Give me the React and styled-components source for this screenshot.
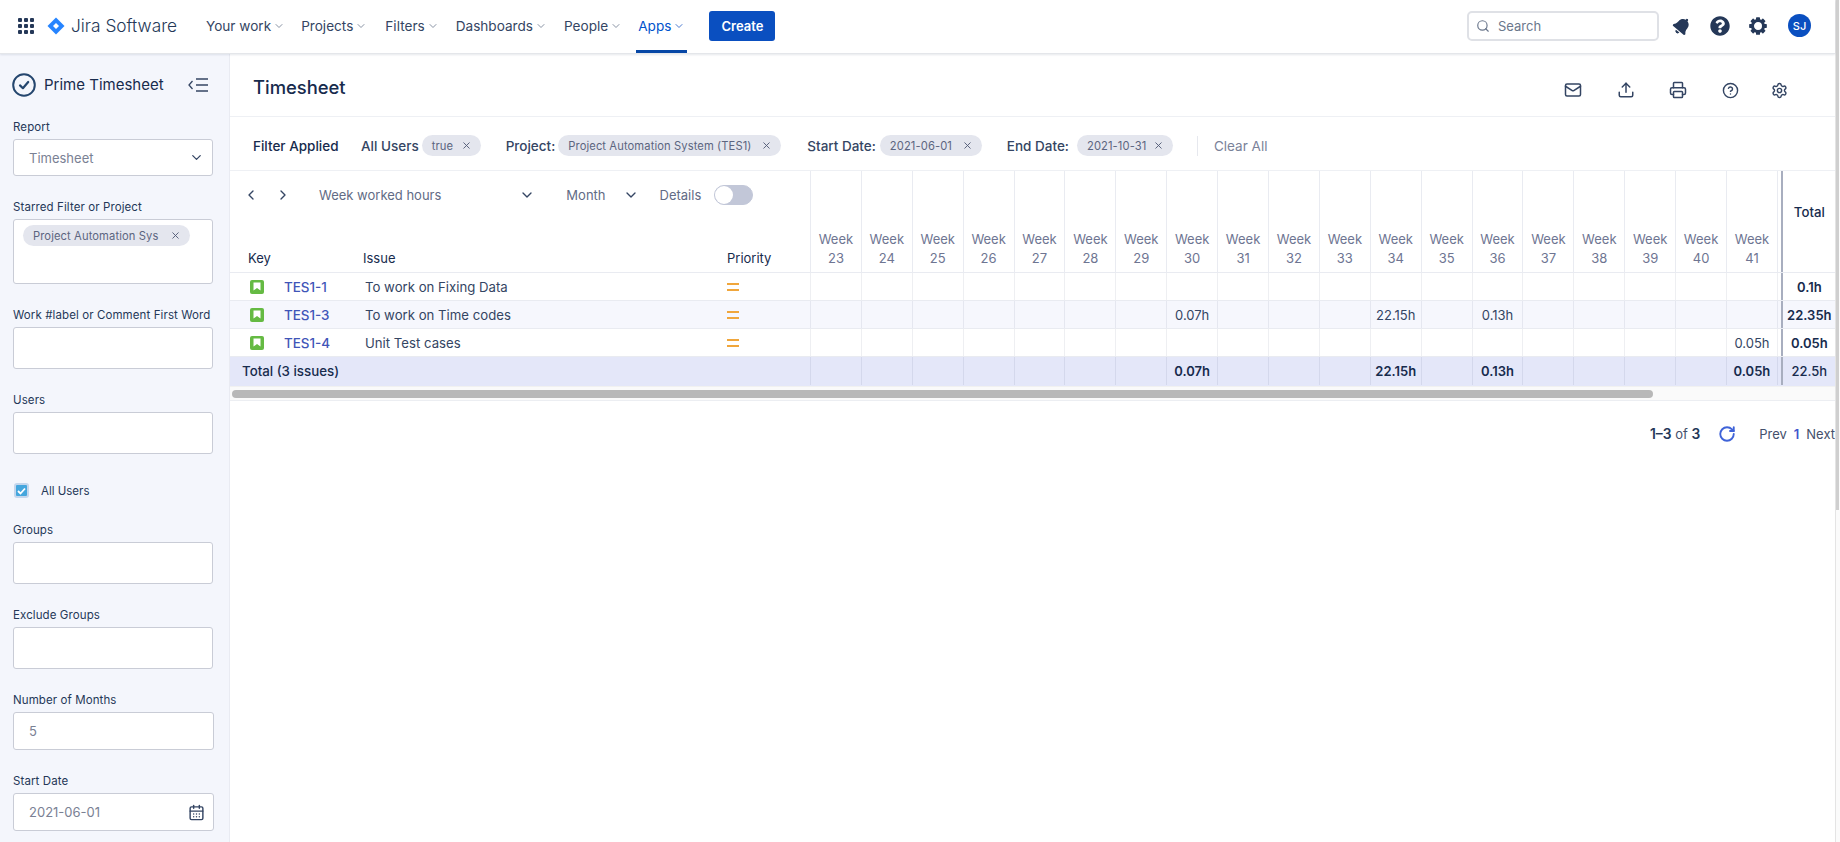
import React from "react";
import styled, { createGlobalStyle } from "styled-components";
import {
  Mail,
  Upload,
  Printer,
  CircleHelp,
  Settings,
  ChevronDown,
  ChevronLeft,
  ChevronRight,
  Search,
  X,
  CalendarDays,
  RotateCw,
} from "lucide-react";
import { FaBell, FaQuestionCircle } from "react-icons/fa";

const GlobalStyle = createGlobalStyle`
  * { box-sizing: border-box; }
  html, body { margin: 0; height: 100%; overflow: hidden; background: #fff; }
  body {
    font-family: Inter, "Liberation Sans", sans-serif;
    color: #172b4d;
    -webkit-font-smoothing: antialiased;
  }
`;

const GRID = "124px 362px 94px repeat(19, 50.9px) 3.9px 55px";

const Page = styled.div`
  display: flex;
  height: 100vh;
  overflow: hidden;
`;
const Main = styled.div`
  flex: 1;
  min-width: 0;
  display: flex;
  flex-direction: column;
`;
const ScrollRail = styled.div`
  width: 5px;
  background: #fbfbfb;
  border-left: 1px solid #e4e4e4;
`;
const RailThumb = styled.div`
  width: 3px;
  height: 510px;
  background: #cfcfcf;
`;

/* top bar */
const TopBar = styled.header`
  height: 54px;
  flex: none;
  display: flex;
  align-items: center;
  padding: 0 24px 2px 18px;
  border-bottom: 1px solid #e4e6ea;
  box-shadow: 0 1px 2px rgba(9, 30, 66, 0.1);
  position: relative;
  z-index: 2;
  background: #fff;
`;
const AppsGrid = styled.div`
  display: grid;
  grid-template-columns: repeat(3, 4px);
  gap: 2px;
  margin-right: 13px;
  span {
    width: 4px;
    height: 4px;
    background: #253858;
    border-radius: 1px;
  }
`;
const Brand = styled.div`
  display: flex;
  align-items: center;
  gap: 6px;
  font-size: 17.3px;
  font-weight: 300;
  color: #253858;
  width: 159px;
  white-space: nowrap;
`;
const NavItem = styled.div`
  position: relative;
  display: flex;
  align-items: center;
  gap: 2px;
  height: 52px;
  font-size: 13.6px;
  color: ${(p) => (p.$active ? "#0052cc" : "#344563")};
  margin-right: ${(p) => p.$gap}px;
  white-space: nowrap;
  svg {
    color: ${(p) => (p.$active ? "#4c7ad0" : "#8993a4")};
  }
  ${(p) =>
    p.$active &&
    `&::after {
      content: "";
      position: absolute;
      left: -2px;
      right: -2px;
      bottom: -1px;
      height: 3px;
      background: #0747a6;
    }`}
`;
const CreateButton = styled.div`
  width: 66px;
  height: 30px;
  display: flex;
  align-items: center;
  justify-content: center;
  border-radius: 3px;
  background: #0a4fc0;
  color: #fff;
  font-size: 13px;
  font-weight: 600;
`;
const TopRight = styled.div`
  margin-left: auto;
  display: flex;
  align-items: center;
`;
const SearchBox = styled.div`
  width: 192px;
  height: 30px;
  border: 2px solid #dfe1e6;
  border-radius: 5px;
  display: flex;
  align-items: center;
  gap: 8px;
  padding: 0 7px;
  font-size: 13px;
  color: #6b778c;
  margin-right: 4px;
`;
const TopIcon = styled.div`
  width: 38px;
  display: flex;
  justify-content: center;
  color: #253858;
`;
const Avatar = styled.div`
  width: 23px;
  height: 23px;
  border-radius: 50%;
  background: #0a4fc0;
  color: #fff;
  font-size: 11px;
  font-weight: 500;
  display: flex;
  align-items: center;
  justify-content: center;
  margin-left: 11px;
`;

const Body = styled.div`
  flex: 1;
  display: flex;
  min-height: 0;
`;

/* sidebar */
const Sidebar = styled.aside`
  width: 230px;
  flex: none;
  background: #f4f6fc;
  border-right: 1px solid #e9ebf2;
  padding: 0 16px 0 13px;
  overflow: hidden;
`;
const SideTitle = styled.div`
  display: flex;
  align-items: center;
  height: 66px;
  padding-bottom: 5px;
  margin-left: -1px;
  padding-right: 4px;
  font-size: 15px;
  font-weight: 400;
  color: #172b4d;
  white-space: nowrap;
  span {
    margin-left: 8px;
    flex: 1;
  }
`;
const Field = styled.div`
  margin-bottom: ${(p) => p.$mb ?? 24}px;
`;
const FieldLabel = styled.div`
  font-size: 11.5px;
  line-height: 14px;
  letter-spacing: 0.1px;
  color: #253858;
  margin-bottom: 5px;
  white-space: nowrap;
`;
const InputBox = styled.div`
  height: ${(p) => p.$h}px;
  width: ${(p) => p.$w ?? 200}px;
  background: #fff;
  border: 1px solid #c9ccd6;
  border-radius: 3px;
  display: flex;
  align-items: ${(p) => (p.$top ? "flex-start" : "center")};
  justify-content: space-between;
  padding: ${(p) => (p.$top ? "5px 9px" : "0 8px 0 15px")};
  font-size: 13px;
  color: #7a8194;
`;
const Chip = styled.div`
  display: inline-flex;
  align-items: center;
  justify-content: space-between;
  height: 21px;
  width: ${(p) => p.$w}px;
  padding: 0 9px 0 10px;
  border-radius: 11px;
  background: #e4e6ee;
  color: #5c6580;
  font-size: 11.2px;
  font-weight: 400;
  letter-spacing: 0.1px;
  white-space: nowrap;
  svg {
    color: #505a75;
    flex: none;
  }
`;
const CheckRow = styled.div`
  display: flex;
  align-items: center;
  gap: 12px;
  margin: 0 0 24px 1px;
  height: 17px;
  font-size: 11.5px;
  color: #253858;
`;
const CheckBox = styled.div`
  width: 15px;
  height: 15px;
  border-radius: 3px;
  background: #45a6dd;
  border: 2px solid #c4d6ec;
  display: flex;
  align-items: center;
  justify-content: center;
`;

/* content */
const Content = styled.main`
  flex: 1;
  min-width: 0;
  display: flex;
  flex-direction: column;
`;
const TitleRow = styled.div`
  height: 63px;
  flex: none;
  display: flex;
  align-items: center;
  padding: 0 47px 0 23px;
  border-bottom: 1px solid #eef0f4;
  h1 {
    margin: 4px auto 0 0;
    font-size: 18.4px;
    font-weight: 500;
    color: #172b4d;
  }
`;
const ActionIcon = styled.div`
  width: 18px;
  display: flex;
  justify-content: center;
  color: #344563;
  margin: 10px 0 0 ${(p) => p.$ml ?? 0}px;
`;
const FilterRow = styled.div`
  height: 54px;
  flex: none;
  display: flex;
  align-items: center;
  padding: 4px 0 0 23px;
  border-bottom: 1px solid #eef0f4;
  font-size: 13.5px;
  font-weight: 500;
  color: #344563;
  white-space: nowrap;
`;
const FilterTitle = styled.div`
  color: #172b4d;
  width: 108px;
`;
const FilterGroup = styled.div`
  display: flex;
  align-items: center;
  gap: ${(p) => p.$gap ?? 3}px;
  margin-right: ${(p) => p.$mr}px;
`;
const Divider = styled.div`
  width: 1px;
  height: 20px;
  background: #e6e8ee;
  margin-right: 16px;
`;
const ClearAll = styled.div`
  font-weight: 400;
  color: #7a8299;
`;

/* table */
const Row = styled.div`
  display: grid;
  grid-template-columns: ${GRID};
  height: ${(p) => p.$h}px;
  flex: none;
  background: ${(p) => p.$bg ?? "#fff"};
  border-bottom: 1px solid ${(p) => (p.$total ? "transparent" : "#e9ebf1")};
`;
const HeaderLeft = styled.div`
  grid-column: span 3;
  display: flex;
  flex-direction: column;
`;
const Toolbar = styled.div`
  height: 48px;
  display: flex;
  align-items: center;
  font-size: 13px;
  color: #626b85;
  white-space: nowrap;
`;
const ToolIcon = styled.span`
  display: flex;
  color: #344563;
  margin-left: ${(p) => p.$ml}px;
`;
const ToolText = styled.span`
  margin-left: ${(p) => p.$ml}px;
`;
const Toggle = styled.div`
  width: 39px;
  height: 20px;
  margin-left: 13px;
  border-radius: 10px;
  background: #c2c7d8;
  border: 1px solid #c2c7d8;
  display: flex;
  align-items: center;
  &::before {
    content: "";
    width: 18px;
    height: 18px;
    border-radius: 50%;
    background: #fff;
  }
`;
const ColumnLabels = styled.div`
  flex: 1;
  display: grid;
  grid-template-columns: 124px 362px 94px;
  align-items: end;
  padding-bottom: 5px;
  font-size: 13px;
  line-height: 18px;
  color: #172b4d;
`;
const ColumnLabel = styled.div`
  padding-left: ${(p) => p.$pad}px;
`;
const WeekHead = styled.div`
  border-left: 1px solid #e9ebf1;
  display: flex;
  flex-direction: column;
  justify-content: flex-end;
  align-items: center;
  padding-bottom: 4px;
  font-size: 13px;
  line-height: 19px;
  color: #6e7592;
`;
const TotalHead = styled.div`
  border-left: 2px solid #a8aebf;
  text-align: center;
  padding-top: 33px;
  font-size: 13.2px;
  font-weight: 500;
  color: #172b4d;
`;
const KeyCell = styled.div`
  display: flex;
  align-items: center;
  gap: 20px;
  padding-left: 20px;
  font-size: 13.4px;
  font-weight: 500;
  color: #3f55b8;
`;
const IssueType = styled.span`
  width: 14px;
  height: 14px;
  border-radius: 2px;
  background: #65ba43;
  display: flex;
  align-items: center;
  justify-content: center;
  flex: none;
`;
const IssueCell = styled.div`
  display: flex;
  align-items: center;
  padding-left: 11px;
  font-size: 13.2px;
  color: #344563;
`;
const PriorityCell = styled.div`
  display: flex;
  align-items: center;
  padding-left: 11px;
`;
const PriorityMark = styled.span`
  width: 12px;
  height: 8px;
  border-top: 2px solid #f0a63c;
  border-bottom: 2px solid #f0a63c;
`;
const TotalLabel = styled.div`
  grid-column: span 3;
  display: flex;
  align-items: center;
  padding-left: 12px;
  font-size: 13.3px;
  font-weight: 500;
  color: #172b4d;
`;
const WeekCell = styled.div`
  border-left: 1px solid rgba(9, 30, 66, 0.07);
  display: flex;
  align-items: center;
  justify-content: center;
  font-size: 13px;
  font-weight: ${(p) => (p.$bold ? 600 : 400)};
  color: ${(p) => (p.$bold ? "#172b4d" : "#344563")};
  white-space: nowrap;
`;
const TotalCell = styled.div`
  border-left: 2px solid #a8aebf;
  display: flex;
  align-items: center;
  justify-content: center;
  font-size: 13px;
  font-weight: ${(p) => (p.$medium ? 500 : 600)};
  color: #172b4d;
  white-space: nowrap;
`;
const ScrollTrack = styled.div`
  height: 15px;
  flex: none;
  padding: 3px 2px 0;
  background: #fafafa;
  border-bottom: 1px solid #eceef2;
  border-top: 1px solid #f1f1f1;
`;
const ScrollThumb = styled.div`
  width: 1421px;
  height: 8px;
  border-radius: 4px;
  background: #b8b8b8;
`;
const Pager = styled.div`
  display: flex;
  align-items: center;
  justify-content: flex-end;
  height: 66px;
  font-size: 13px;
  color: #44506b;
  white-space: nowrap;
  b {
    font-size: 13.8px;
    font-weight: 600;
    color: #253858;
  }
`;
const PageLink = styled.span`
  margin-left: ${(p) => p.$ml}px;
  color: ${(p) => (p.$current ? "#3f55cc" : "#44506b")};
  font-weight: ${(p) => (p.$current ? 600 : 400)};
`;
const RefreshIcon = styled.span`
  display: flex;
  color: #3f63d8;
  margin: 0 23px 0 18px;
`;

const weeks = Array.from({ length: 19 }, (_, i) => 23 + i);

const rows = [
  { key: "TES1-1", issue: "To work on Fixing Data", cells: {}, total: "0.1h" },
  {
    key: "TES1-3",
    issue: "To work on Time codes",
    cells: { 30: "0.07h", 34: "22.15h", 36: "0.13h" },
    total: "22.35h",
    bg: "#f6f7fd",
  },
  { key: "TES1-4", issue: "Unit Test cases", cells: { 41: "0.05h" }, total: "0.05h" },
];
const totals = { 30: "0.07h", 34: "22.15h", 36: "0.13h", 41: "0.05h" };

const JiraMark = () => (
  <svg width="18" height="18" viewBox="0 0 18 18">
    <path d="M9 0.5 17.5 9 9 17.5 0.5 9Z" fill="#2684ff" />
    <path d="M9 6 12 9 9 12 6 9Z" fill="#fff" />
  </svg>
);

const PrimeMark = () => (
  <svg width="24" height="24" viewBox="0 0 24 24" fill="none">
    <circle cx="12" cy="12" r="10.8" stroke="#24466e" strokeWidth="2" />
    <path d="M8 12.4 10.9 15.2 16.2 9" stroke="#24466e" strokeWidth="2.2" strokeLinecap="round" strokeLinejoin="round" />
  </svg>
);

const CollapseMark = () => (
  <svg width="21" height="16" viewBox="0 0 21 16" fill="none" stroke="#344563" strokeWidth="1.3">
    <path d="M4.5 4 1 8 4.5 12" />
    <path d="M8 2H20M8 8H20M8 14H20" />
  </svg>
);

const StoryMark = () => (
  <svg width="8" height="9" viewBox="0 0 8 9">
    <path d="M0.5 0.5H7.5V8.5L4 6 0.5 8.5Z" fill="#fff" />
  </svg>
);

const GearMark = () => (
  <svg width="20" height="20" viewBox="0 0 24 24" fill="#253858">
    {[0, 45, 90, 135, 180, 225, 270, 315].map((a) => (
      <rect key={a} x="9.6" y="1.4" width="4.8" height="5" rx="0.8" transform={`rotate(${a} 12 12)`} />
    ))}
    <circle cx="12" cy="12" r="6.6" fill="none" stroke="#253858" strokeWidth="3.6" />
  </svg>
);

const Nav = ({ label, gap, active }) => (
  <NavItem $gap={gap} $active={active}>
    {label}
    <ChevronDown size={12} />
  </NavItem>
);

const FormField = ({ label, h, w, mb, children, top }) => (
  <Field $mb={mb}>
    <FieldLabel>{label}</FieldLabel>
    <InputBox $h={h} $w={w} $top={top}>
      {children}
    </InputBox>
  </Field>
);

const Tag = ({ label, w }) => (
  <Chip $w={w}>
    {label}
    <X size={11} />
  </Chip>
);

export default function App() {
  return (
    <Page>
      <GlobalStyle />
      <Main>
        <TopBar>
          <AppsGrid>
            {Array.from({ length: 9 }, (_, i) => (
              <span key={i} />
            ))}
          </AppsGrid>
          <Brand>
            <JiraMark />
            Jira Software
          </Brand>
          <Nav label="Your work" gap={16} />
          <Nav label="Projects" gap={18} />
          <Nav label="Filters" gap={17} />
          <Nav label="Dashboards" gap={17} />
          <Nav label="People" gap={16} />
          <Nav label="Apps" gap={24} active />
          <CreateButton>Create</CreateButton>
          <TopRight>
            <SearchBox>
              <Search size={14} />
              Search
            </SearchBox>
            <TopIcon>
              <FaBell size={18} style={{ transform: "rotate(40deg)" }} />
            </TopIcon>
            <TopIcon>
              <FaQuestionCircle size={20} />
            </TopIcon>
            <TopIcon>
              <GearMark />
            </TopIcon>
            <Avatar>SJ</Avatar>
          </TopRight>
        </TopBar>
        <Body>
          <Sidebar>
            <SideTitle>
              <PrimeMark />
              <span>Prime Timesheet</span>
              <CollapseMark />
            </SideTitle>
            <FormField label="Report" h={37}>
              Timesheet
              <ChevronDown size={15} color="#344563" />
            </FormField>
            <FormField label="Starred Filter or Project" h={65} top>
              <Tag label="Project Automation Sys" w={167} />
            </FormField>
            <FormField label="Work #label or Comment First Word" h={42} />
            <FormField label="Users" h={42} mb={28} />
            <CheckRow>
              <CheckBox>
                <svg width="9" height="8" viewBox="0 0 9 8" fill="none" stroke="#fff" strokeWidth="1.8">
                  <path d="M1 4 3.5 6.5 8 1.5" />
                </svg>
              </CheckBox>
              All Users
            </CheckRow>
            <FormField label="Groups" h={42} />
            <FormField label="Exclude Groups" h={42} />
            <FormField label="Number of Months" h={38} w={201} mb={24}>
              5
            </FormField>
            <FormField label="Start Date" h={38} w={201}>
              2021-06-01
              <CalendarDays size={17} color="#344563" />
            </FormField>
          </Sidebar>
          <Content>
            <TitleRow>
              <h1>Timesheet</h1>
              <ActionIcon>
                <Mail size={18} />
              </ActionIcon>
              <ActionIcon $ml={35}>
                <Upload size={18} />
              </ActionIcon>
              <ActionIcon $ml={34}>
                <Printer size={18} />
              </ActionIcon>
              <ActionIcon $ml={34}>
                <CircleHelp size={17} />
              </ActionIcon>
              <ActionIcon $ml={31}>
                <Settings size={17} />
              </ActionIcon>
            </TitleRow>
            <FilterRow>
              <FilterTitle>Filter Applied</FilterTitle>
              <FilterGroup $mr={25}>
                All Users
                <Tag label="true" w={59} />
              </FilterGroup>
              <FilterGroup $mr={26}>
                Project:
                <Tag label="Project Automation System (TES1)" w={223} />
              </FilterGroup>
              <FilterGroup $mr={25} $gap={4}>
                Start Date:
                <Tag label="2021-06-01" w={102} />
              </FilterGroup>
              <FilterGroup $mr={24} $gap={8}>
                End Date:
                <Tag label="2021-10-31" w={96} />
              </FilterGroup>
              <Divider />
              <ClearAll>Clear All</ClearAll>
            </FilterRow>
            <Row $h={102}>
              <HeaderLeft>
                <Toolbar>
                  <ToolIcon $ml={13}>
                    <ChevronLeft size={16} />
                  </ToolIcon>
                  <ToolIcon $ml={16}>
                    <ChevronRight size={16} />
                  </ToolIcon>
                  <ToolText $ml={28}>Week worked hours</ToolText>
                  <ToolIcon $ml={78}>
                    <ChevronDown size={16} />
                  </ToolIcon>
                  <ToolText $ml={31}>Month</ToolText>
                  <ToolIcon $ml={17}>
                    <ChevronDown size={16} />
                  </ToolIcon>
                  <ToolText $ml={21}>Details</ToolText>
                  <Toggle />
                </Toolbar>
                <ColumnLabels>
                  <ColumnLabel $pad={18}>Key</ColumnLabel>
                  <ColumnLabel $pad={9}>Issue</ColumnLabel>
                  <ColumnLabel $pad={11}>Priority</ColumnLabel>
                </ColumnLabels>
              </HeaderLeft>
              {weeks.map((w) => (
                <WeekHead key={w}>
                  <span>Week</span>
                  <span>{w}</span>
                </WeekHead>
              ))}
              <WeekHead />
              <TotalHead>Total</TotalHead>
            </Row>
            {rows.map((r) => (
              <Row key={r.key} $h={28} $bg={r.bg}>
                <KeyCell>
                  <IssueType>
                    <StoryMark />
                  </IssueType>
                  {r.key}
                </KeyCell>
                <IssueCell>{r.issue}</IssueCell>
                <PriorityCell>
                  <PriorityMark />
                </PriorityCell>
                {weeks.map((w) => (
                  <WeekCell key={w}>{r.cells[w]}</WeekCell>
                ))}
                <WeekCell />
                <TotalCell>{r.total}</TotalCell>
              </Row>
            ))}
            <Row $h={29} $bg="#e4e7f9" $total>
              <TotalLabel>Total (3 issues)</TotalLabel>
              {weeks.map((w) => (
                <WeekCell key={w} $bold>
                  {totals[w]}
                </WeekCell>
              ))}
              <WeekCell />
              <TotalCell $medium>22.5h</TotalCell>
            </Row>
            <ScrollTrack>
              <ScrollThumb />
            </ScrollTrack>
            <Pager>
              <b>1–3</b>&nbsp;of&nbsp;<b>3</b>
              <RefreshIcon>
                <RotateCw size={18} strokeWidth={2.5} />
              </RefreshIcon>
              <PageLink $ml={0}>Prev</PageLink>
              <PageLink $ml={7} $current>
                1
              </PageLink>
              <PageLink $ml={7}>Next</PageLink>
            </Pager>
          </Content>
        </Body>
      </Main>
      <ScrollRail>
        <RailThumb />
      </ScrollRail>
    </Page>
  );
}
